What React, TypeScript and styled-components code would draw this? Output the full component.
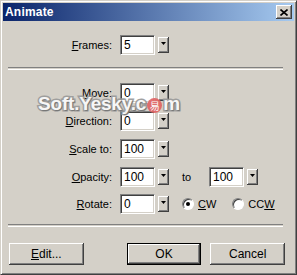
import React from "react";
import styled, { createGlobalStyle } from "styled-components";

const GlobalStyle = createGlobalStyle`
  html, body {
    margin: 0;
    padding: 0;
    background: #d4d0c8;
  }
  body {
    font-family: "Liberation Sans", Arial, sans-serif;
    font-size: 11px;
    color: #000;
  }
`;

const Window = styled.div`
  position: relative;
  width: 297px;
  height: 275px;
  box-sizing: border-box;
  background: #d4d0c8;
  border: 1px solid;
  border-color: #d4d0c8 #404040 #404040 #d4d0c8;
  box-shadow: inset 1px 1px 0 #fff, inset -1px -1px 0 #808080;
  padding: 2px;
  display: flex;
  flex-direction: column;
`;

const TitleBar = styled.div`
  height: 18px;
  display: flex;
  align-items: center;
  justify-content: space-between;
  padding: 0 2px 0 2px;
  background: linear-gradient(to right, #0a246a, #a6caf0);
`;

const Title = styled.span`
  color: #fff;
  font-weight: bold;
  font-size: 12px;
  letter-spacing: 0.2px;
`;

const CloseBtn = styled.div`
  width: 16px;
  height: 14px;
  box-sizing: border-box;
  background: #d4d0c8;
  box-shadow: inset -1px -1px 0 #404040, inset 1px 1px 0 #fff, inset -2px -2px 0 #808080;
  display: flex;
  align-items: center;
  justify-content: center;
`;

const Body = styled.div`
  flex: 1;
  padding: 14px 5px 0 5px;
  display: flex;
  flex-direction: column;
`;

const Row = styled.div<{ $mt?: number }>`
  display: flex;
  align-items: center;
  height: 20px;
  margin-top: ${p => p.$mt ?? 0}px;
`;

const Label = styled.span`
  width: 104px;
  text-align: right;
  margin-right: 8px;
  white-space: nowrap;
`;

const Key = styled.span`
  text-decoration: underline;
`;

const Field = styled.div`
  width: 35px;
  height: 20px;
  box-sizing: border-box;
  background: #fff;
  border: 1px solid;
  border-color: #808080 #fff #fff #808080;
  box-shadow: inset 1px 1px 0 #404040, inset -1px -1px 0 #d4d0c8;
  padding: 0 0 0 3px;
  display: flex;
  align-items: center;
  font-size: 12px;
`;

const Drop = styled.div`
  width: 11px;
  height: 16px;
  margin-left: 3px;
  box-sizing: border-box;
  background: #d4d0c8;
  box-shadow: inset -1px -1px 0 #404040, inset 1px 1px 0 #fff, inset -2px -2px 0 #808080;
  display: flex;
  align-items: flex-start;
  justify-content: center;
  padding-top: 5px;
`;

const Separator = styled.div<{ $mt: number }>`
  height: 1px;
  margin: ${p => p.$mt}px 6px 0 0;
  border-top: 1px solid #808080;
  border-bottom: 1px solid #fff;
`;

const To = styled.span`
  width: 27px;
  margin-left: 13px;
`;

const Radio = styled.span<{ $ml: number }>`
  display: flex;
  align-items: center;
  margin-left: ${p => p.$ml}px;
  gap: 4px;
`;

const RadioDot = styled.span<{ $on?: boolean }>`
  width: 12px;
  height: 12px;
  box-sizing: border-box;
  border-radius: 50%;
  background: #fff;
  border: 1px solid;
  border-color: #808080 #fff #fff #808080;
  box-shadow: inset 1px 1px 0 #404040;
  display: flex;
  align-items: center;
  justify-content: center;
  &::after {
    content: "";
    width: 4px;
    height: 4px;
    border-radius: 50%;
    background: ${p => (p.$on ? "#000" : "transparent")};
  }
`;

const Buttons = styled.div`
  display: flex;
  align-items: center;
  margin-top: 16px;
  padding: 0 4px 0 1px;
`;

const Button = styled.div<{ $default?: boolean; $ml?: number }>`
  width: 75px;
  height: 22px;
  box-sizing: border-box;
  margin-left: ${p => p.$ml ?? 0}px;
  display: flex;
  align-items: center;
  justify-content: center;
  background: #d4d0c8;
  border: ${p => (p.$default ? "1px solid #000" : "none")};
  box-shadow: inset -1px -1px 0 #404040, inset 1px 1px 0 #fff, inset -2px -2px 0 #808080;
  font-size: 12px;
`;

const Watermark = styled.div`
  position: absolute;
  left: 37px;
  top: 92px;
  display: flex;
  align-items: center;
  font-family: "Liberation Sans", Arial, sans-serif;
  font-weight: bold;
  font-size: 19px;
  letter-spacing: -0.2px;
  color: #fafafa;
  -webkit-text-stroke: 3px #9a9a9a;
  paint-order: stroke fill;
  text-shadow: 1px 1px 1px rgba(0, 0, 0, 0.3);
  opacity: 0.92;
  pointer-events: none;
`;

const Logo = styled.span`
  width: 15px;
  height: 15px;
  margin: 2px 1px 0 1px;
  border-radius: 50%;
  background: #e06464;
  -webkit-text-stroke: 0;
  text-shadow: none;
  color: #fff;
  font-family: "Noto Sans CJK SC", sans-serif;
  font-weight: normal;
  font-size: 10px;
  display: flex;
  align-items: center;
  justify-content: center;
`;

const Arrow = () => (
  <svg width="5" height="3" viewBox="0 0 5 3">
    <path d="M0 0h5L2.5 3z" fill="#000" />
  </svg>
);

const Spin = ({ value }: { value: string }) => (
  <>
    <Field>{value}</Field>
    <Drop>
      <Arrow />
    </Drop>
  </>
);

export default function App() {
  return (
    <>
      <GlobalStyle />
      <Window>
        <TitleBar>
          <Title>Animate</Title>
          <CloseBtn>
            <svg width="8" height="7" viewBox="0 0 8 7">
              <path d="M0.5 0.5L7.5 6.5M7.5 0.5L0.5 6.5" stroke="#000" strokeWidth="1.6" />
            </svg>
          </CloseBtn>
        </TitleBar>
        <Body>
          <Row>
            <Label><Key>F</Key>rames:</Label>
            <Spin value="5" />
          </Row>
          <Separator $mt={12} />
          <Row $mt={13}>
            <Label><Key>M</Key>ove:</Label>
            <Spin value="0" />
          </Row>
          <Row $mt={8}>
            <Label><Key>D</Key>irection:</Label>
            <Spin value="0" />
          </Row>
          <Row $mt={8}>
            <Label><Key>S</Key>cale to:</Label>
            <Spin value="100" />
          </Row>
          <Row $mt={8}>
            <Label><Key>O</Key>pacity:</Label>
            <Spin value="100" />
            <To>to</To>
            <Spin value="100" />
          </Row>
          <Row $mt={7}>
            <Label><Key>R</Key>otate:</Label>
            <Spin value="0" />
            <Radio $ml={13}>
              <RadioDot $on />
              <span><Key>C</Key>W</span>
            </Radio>
            <Radio $ml={16}>
              <RadioDot />
              <span>CC<Key>W</Key></span>
            </Radio>
          </Row>
          <Separator $mt={10} />
          <Buttons>
            <Button><span><Key>E</Key>dit...</span></Button>
            <Button $default $ml={43}>OK</Button>
            <Button $ml={9}>Cancel</Button>
          </Buttons>
        </Body>
        <Watermark>
          Soft.Yesky.c<Logo>易</Logo>m
        </Watermark>
      </Window>
    </>
  );
}
